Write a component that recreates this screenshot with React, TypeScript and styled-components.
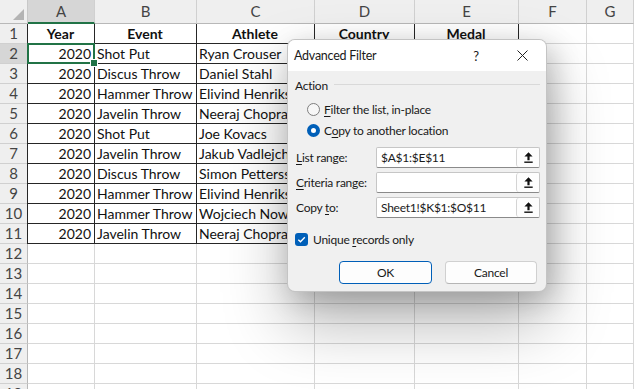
import React from 'react';
import styled, { createGlobalStyle, css } from 'styled-components';

const GlobalStyle = createGlobalStyle`
  html, body { margin: 0; padding: 0; background: #ffffff; overflow: hidden; }
  body { width: 634px; height: 389px; }
  * { box-sizing: border-box; }
`;

const SHEET_FONT = `Lato, "Liberation Sans", sans-serif`;
const UI_FONT = `Lato, "Noto Sans", sans-serif`;

const Page = styled.div`
  position: relative;
  width: 634px;
  height: 389px;
  overflow: hidden;
  background: #ffffff;
`;

const Sheet = styled.div`
  display: grid;
  grid-template-columns: 28px 67px 102px 118px 100px 104px 68px 1fr;
  grid-template-rows: 24px;
  grid-auto-rows: 20px;
  font-family: ${SHEET_FONT};
`;

const Corner = styled.div`
  background: #efefef;
  border-right: 1px solid #c8c8c8;
  border-bottom: 1px solid #b8b8b8;
  display: flex;
  align-items: flex-end;
  justify-content: flex-end;
  padding: 0 3px 3px 0;
`;

const ColHeader = styled.div<{ $active?: boolean }>`
  background: ${(p) => (p.$active ? '#d6d6d6' : '#efefef')};
  border-right: 1px solid #d0d0d0;
  border-bottom: 1px solid #b8b8b8;
  color: #444444;
  font-size: 15px;
  line-height: 23px;
  text-align: center;
  ${(p) =>
    p.$active &&
    css`
      border-bottom: 2px solid #217346;
      line-height: 22px;
    `}
`;

const RowHeader = styled.div<{ $active?: boolean }>`
  background: ${(p) => (p.$active ? '#d6d6d6' : '#efefef')};
  border-right: 1px solid #b8b8b8;
  border-bottom: 1px solid #d0d0d0;
  color: #444444;
  font-size: 15px;
  line-height: 19px;
  text-align: center;
`;

const Cell = styled.div<{
  $align?: 'left' | 'right' | 'center';
  $bold?: boolean;
  $table?: boolean;
  $first?: boolean;
  $selected?: boolean;
}>`
  position: relative;
  border-right: 1px solid ${(p) => (p.$table ? '#262626' : '#d8d8d8')};
  border-bottom: 1px solid ${(p) => (p.$table ? '#262626' : '#d8d8d8')};
  ${(p) => p.$first && css`border-left: 1px solid #262626; margin-left: -1px;`}
  padding: 0 3px 0 2px;
  font-size: 14px;
  line-height: 19px;
  color: #111111;
  white-space: nowrap;
  overflow: hidden;
  text-align: ${(p) => p.$align ?? 'left'};
  font-weight: ${(p) => (p.$bold ? 700 : 400)};
  ${(p) =>
    p.$selected &&
    css`
      overflow: visible;
      &::after {
        content: '';
        position: absolute;
        left: -1px;
        top: -1px;
        right: -1px;
        bottom: -1px;
        border: 2px solid #217346;
        pointer-events: none;
      }
      &::before {
        content: '';
        position: absolute;
        right: -4px;
        bottom: -4px;
        width: 6px;
        height: 6px;
        background: #217346;
        border: 1px solid #ffffff;
        z-index: 1;
      }
    `}
`;

/* ---------- Dialog ---------- */

const Dialog = styled.div`
  position: absolute;
  left: 287px;
  top: 39px;
  width: 260px;
  height: 253px;
  border-radius: 8px;
  border: 1px solid rgba(0, 0, 0, 0.18);
  background: #f0f0f0;
  box-shadow: 0 32px 64px rgba(0, 0, 0, 0.28), 6px 8px 28px rgba(0, 0, 0, 0.2);
  overflow: hidden;
  font-family: ${UI_FONT};
  font-size: 12px;
  letter-spacing: -0.25px;
  color: #1a1a1a;
  display: flex;
  flex-direction: column;
  white-space: nowrap;
`;

const TitleBar = styled.div`
  height: 31px;
  flex: none;
  background: #ffffff;
  display: flex;
  align-items: center;
  padding: 0 1px 0 6px;
`;

const Title = styled.div`
  flex: 1;
  font-size: 12.5px;
  color: #1a1a1a;
`;

const TitleButton = styled.div`
  width: 46px;
  height: 30px;
  display: flex;
  align-items: center;
  justify-content: center;
  font-size: 13px;
  color: #1a1a1a;
`;

const Body = styled.div`
  flex: 1;
  padding: 7px 6px 9px 7px;
  display: flex;
  flex-direction: column;
`;

const GroupHeader = styled.div`
  height: 16px;
  display: flex;
  align-items: center;
  gap: 6px;
  line-height: 16px;
`;

const GroupLine = styled.div`
  flex: 1;
  height: 1px;
  background: #d9d9d9;
  margin-top: -3px;
`;

const RadioList = styled.div`
  padding: 5px 0 0 12px;
  display: flex;
  flex-direction: column;
`;

const RadioRow = styled.div`
  height: 21px;
  display: flex;
  align-items: center;
  gap: 4px;
`;

const RadioDot = styled.span<{ $checked?: boolean }>`
  width: 13px;
  height: 13px;
  border-radius: 50%;
  flex: none;
  ${(p) =>
    p.$checked
      ? css`
          background: #ffffff;
          border: 4px solid #005fb8;
        `
      : css`
          background: #f7f7f7;
          border: 1px solid #7e7e7e;
        `}
`;

const Key = styled.span`
  text-decoration: underline;
  text-underline-offset: 2px;
`;

const Fields = styled.div`
  margin-top: 6px;
  display: flex;
  flex-direction: column;
  gap: 4px;
`;

const FieldRow = styled.div`
  height: 21px;
  display: flex;
  align-items: center;
`;

const FieldLabel = styled.label`
  width: 81px;
  padding-left: 1px;
  flex: none;
`;

const RangeBox = styled.div`
  width: 166px;
  height: 21px;
  background: #ffffff;
  border: 1px solid #c6c6c6;
  border-bottom-color: #8a8a8a;
  border-radius: 2px;
  display: flex;
  align-items: stretch;
`;

const RangeValue = styled.div`
  flex: 1;
  padding-left: 4px;
  line-height: 19px;
  overflow: hidden;
`;

const RangeButton = styled.div`
  width: 23px;
  flex: none;
  border-left: 1px solid #d4d4d4;
  border-radius: 3px;
  background: #fdfdfd;
  display: flex;
  align-items: center;
  justify-content: center;
`;

const CheckRow = styled.div`
  margin-top: 11px;
  height: 20px;
  display: flex;
  align-items: center;
  gap: 5px;
`;

const CheckBox = styled.span`
  width: 13px;
  height: 13px;
  border-radius: 3px;
  background: #005fb8;
  display: flex;
  align-items: center;
  justify-content: center;
  flex: none;
`;

const ButtonRow = styled.div`
  margin-top: 12px;
  display: flex;
  justify-content: flex-end;
  gap: 13px;
  padding-right: 3px;
`;

const Button = styled.div<{ $primary?: boolean; $w: number }>`
  width: ${(p) => p.$w}px;
  height: 23px;
  border-radius: 4px;
  background: #fdfdfd;
  border: 1px solid ${(p) => (p.$primary ? '#005fb8' : '#d0d0d0')};
  ${(p) => !p.$primary && css`border-bottom-color: #b5b5b5;`}
  display: flex;
  align-items: center;
  justify-content: center;
  font-size: 12px;
  color: #1a1a1a;
`;

const UpArrow = () => (
  <svg width="9" height="11" viewBox="0 0 9 11">
    <path d="M4.5 0.2 L8.6 4.4 H5.6 V8.3 H3.4 V4.4 H0.4 Z" fill="#111" />
    <rect x="0.3" y="9.5" width="8.4" height="1.4" fill="#111" />
  </svg>
);

const CloseIcon = () => (
  <svg width="11" height="11" viewBox="0 0 11 11">
    <path d="M0.5 0.5 L10.5 10.5 M10.5 0.5 L0.5 10.5" stroke="#222" strokeWidth="1" />
  </svg>
);

const CheckIcon = () => (
  <svg width="9" height="9" viewBox="0 0 9 9">
    <path d="M1.3 4.7 L3.5 6.8 L7.8 2.2" stroke="#fff" strokeWidth="1.3" fill="none" />
  </svg>
);

const CornerTriangle = () => (
  <svg width="11" height="11" viewBox="0 0 11 11">
    <path d="M11 0 V11 H0 Z" fill="#b4b4b4" />
  </svg>
);

const cols = ['A', 'B', 'C', 'D', 'E', 'F', 'G'];

const data: [string, string, string, string, string][] = [
  ['2020', 'Shot Put', 'Ryan Crouser', 'USA', 'Gold'],
  ['2020', 'Discus Throw', 'Daniel Stahl', 'Sweden', 'Gold'],
  ['2020', 'Hammer Throw', 'Elivind Henriksen', 'Norway', 'Silver'],
  ['2020', 'Javelin Throw', 'Neeraj Chopra', 'India', 'Gold'],
  ['2020', 'Shot Put', 'Joe Kovacs', 'USA', 'Silver'],
  ['2020', 'Javelin Throw', 'Jakub Vadlejch', 'Czech Republic', 'Silver'],
  ['2020', 'Discus Throw', 'Simon Pettersson', 'Sweden', 'Silver'],
  ['2020', 'Hammer Throw', 'Elivind Henriksen', 'Norway', 'Silver'],
  ['2020', 'Hammer Throw', 'Wojciech Nowicki', 'Poland', 'Gold'],
  ['2020', 'Javelin Throw', 'Neeraj Chopra', 'India', 'Gold'],
];

const header = ['Year', 'Event', 'Athlete', 'Country', 'Medal'];

export default function App() {
  const rows: React.ReactNode[] = [];
  for (let r = 1; r <= 19; r++) {
    rows.push(
      <RowHeader key={`rh${r}`} $active={r === 2}>
        {r}
      </RowHeader>
    );
    for (let c = 0; c < 7; c++) {
      const inTable = r <= 11 && c < 5;
      let text = '';
      let align: 'left' | 'right' | 'center' = 'left';
      let bold = false;
      if (r === 1 && c < 5) {
        text = header[c];
        align = 'center';
        bold = true;
      } else if (inTable) {
        text = data[r - 2][c];
        align = c === 0 ? 'right' : 'left';
      }
      rows.push(
        <Cell
          key={`c${r}-${c}`}
          $align={align}
          $bold={bold}
          $table={inTable}
          $first={inTable && c === 0}
          $selected={r === 2 && c === 0}
        >
          {text}
        </Cell>
      );
    }
  }

  return (
    <Page>
      <GlobalStyle />
      <Sheet>
        <Corner>
          <CornerTriangle />
        </Corner>
        {cols.map((c) => (
          <ColHeader key={c} $active={c === 'A'}>
            {c}
          </ColHeader>
        ))}
        {rows}
      </Sheet>

      <Dialog>
        <TitleBar>
          <Title>Advanced Filter</Title>
          <TitleButton>?</TitleButton>
          <TitleButton>
            <CloseIcon />
          </TitleButton>
        </TitleBar>
        <Body>
          <GroupHeader>
            <span>Action</span>
            <GroupLine />
          </GroupHeader>
          <RadioList>
            <RadioRow>
              <RadioDot />
              <span>
                <Key>F</Key>ilter the list, in-place
              </span>
            </RadioRow>
            <RadioRow>
              <RadioDot $checked />
              <span>
                C<Key>o</Key>py to another location
              </span>
            </RadioRow>
          </RadioList>
          <Fields>
            <FieldRow>
              <FieldLabel>
                <Key>L</Key>ist range:
              </FieldLabel>
              <RangeBox>
                <RangeValue>$A$1:$E$11</RangeValue>
                <RangeButton>
                  <UpArrow />
                </RangeButton>
              </RangeBox>
            </FieldRow>
            <FieldRow>
              <FieldLabel>
                <Key>C</Key>riteria range:
              </FieldLabel>
              <RangeBox>
                <RangeValue></RangeValue>
                <RangeButton>
                  <UpArrow />
                </RangeButton>
              </RangeBox>
            </FieldRow>
            <FieldRow>
              <FieldLabel>
                Copy <Key>t</Key>o:
              </FieldLabel>
              <RangeBox>
                <RangeValue>Sheet1!$K$1:$O$11</RangeValue>
                <RangeButton>
                  <UpArrow />
                </RangeButton>
              </RangeBox>
            </FieldRow>
          </Fields>
          <CheckRow>
            <CheckBox>
              <CheckIcon />
            </CheckBox>
            <span>
              Unique <Key>r</Key>ecords only
            </span>
          </CheckRow>
          <ButtonRow>
            <Button $primary $w={93}>
              OK
            </Button>
            <Button $w={92}>Cancel</Button>
          </ButtonRow>
        </Body>
      </Dialog>
    </Page>
  );
}
